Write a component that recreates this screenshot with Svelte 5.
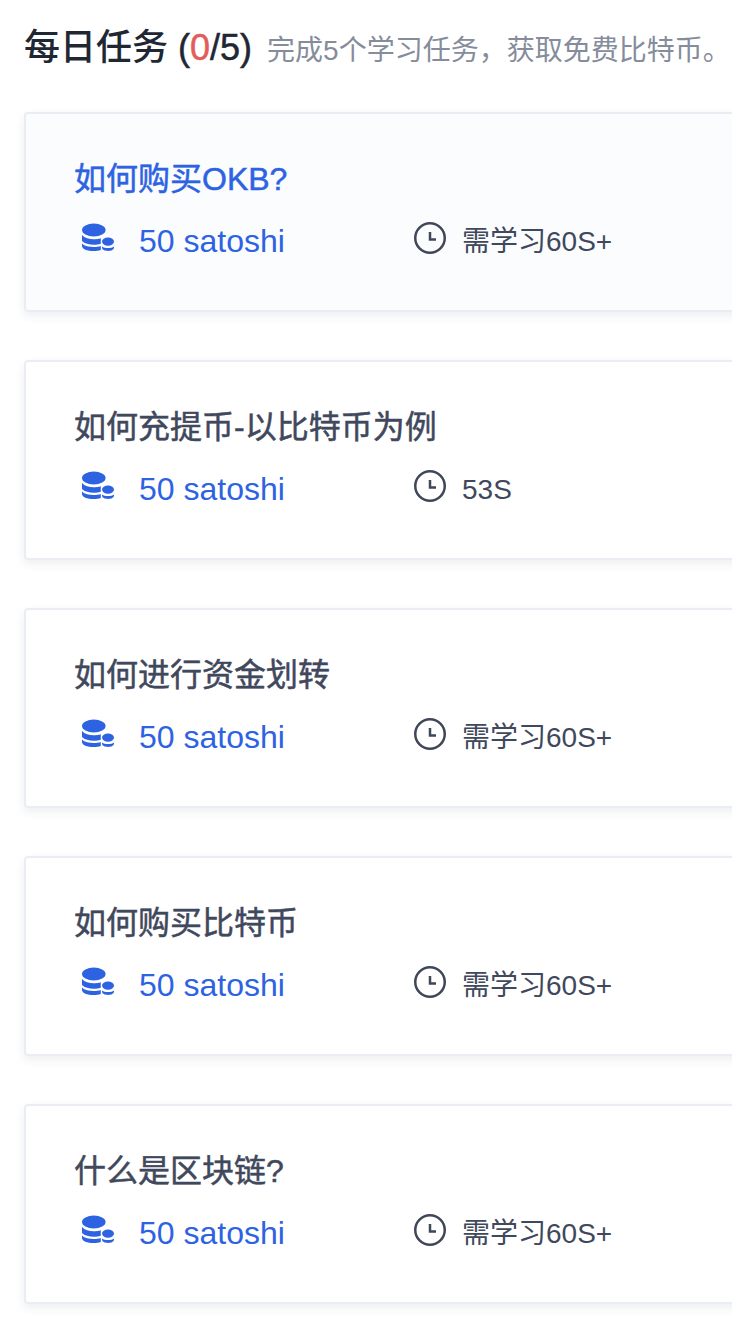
<script lang="ts">
  const tasks = [
    { name: '如何购买OKB?', time: '需学习60S+', active: true },
    { name: '如何充提币-以比特币为例', time: '53S', active: false },
    { name: '如何进行资金划转', time: '需学习60S+', active: false },
    { name: '如何购买比特币', time: '需学习60S+', active: false },
    { name: '什么是区块链?', time: '需学习60S+', active: false }
  ]
</script>

<div class="page">
  <header class="head">
    <h2>每日任务 <span class="count">(<em>0</em>/5)</span></h2>
    <p>完成5个学习任务，获取免费比特币。</p>
  </header>

  <ul class="list">
    {#each tasks as task}
      <li class="card" class:active={task.active}>
        <div class="name">{task.name}</div>
        <div class="meta">
          <div class="reward">
            <svg class="coins" viewBox="0 0 32 29" width="32" height="29" aria-hidden="true">
              <ellipse cx="11.8" cy="7" rx="11.8" ry="6.5" />
              <path d="M0 12c2.5 3 7 4.2 11.8 4.2 2.5 0 5-.3 7-1v5.5c-2 .7-4.5 1-7 1C7 21.7 2.5 20.5 0 18z" />
              <path d="M0 20.5c2.5 2.6 7 3.5 11.8 3.5 2.5 0 5-.3 7-1v4c-2 .7-4.5 1-7 1C5 28 0 26 0 23z" />
              <ellipse cx="26" cy="18.6" rx="6" ry="4.2" />
              <path d="M20 23.4c1.4 1 3.5 1.5 6 1.5s4.6-.5 6-1.5v1.2c0 2.2-2.7 3.4-6 3.4s-6-1.2-6-3.4z" />
            </svg>
            <span>50 satoshi</span>
          </div>
          <div class="time">
            <svg class="clock" viewBox="0 0 32 32" width="32" height="32" aria-hidden="true">
              <circle cx="16" cy="16" r="14.75" />
              <path d="M16 10v7.5h6" />
            </svg>
            <span>{task.time}</span>
          </div>
        </div>
      </li>
    {/each}
  </ul>
</div>

<style>
  :global(body) {
    margin: 0;
    background: #fff;
    font-family: "Liberation Sans", "Noto Sans CJK SC", sans-serif;
  }

  .page {
    width: 732px;
    height: 1334px;
    overflow: hidden;
    padding: 25px 0 0 24px;
    box-sizing: border-box;
  }

  .head {
    display: flex;
    align-items: baseline;
    gap: 15px;
    height: 87px;
    white-space: nowrap;
  }

  h2 {
    margin: 0;
    font-size: 36px;
    line-height: 46px;
    font-weight: 500;
    color: #1f2733;
  }

  .count {
    -webkit-text-stroke: 0.5px currentColor;
  }

  em {
    font-style: normal;
    color: #e25c5c;
  }

  p {
    margin: 0;
    font-size: 28px;
    line-height: 46px;
    color: #858c9c;
  }

  .list {
    list-style: none;
    margin: 0;
    padding: 0;
    display: flex;
    flex-direction: column;
    gap: 48px;
  }

  .card {
    width: 760px;
    height: 200px;
    box-sizing: border-box;
    padding: 44px 48px 0;
    background: #fff;
    border: 2px solid #eaedf4;
    border-radius: 4px;
    box-shadow: 0 4px 10px rgba(40, 50, 80, 0.08);
  }

  .card.active {
    background: #fbfcfe;
  }

  .name {
    font-size: 32px;
    line-height: 42px;
    color: #3f485c;
    -webkit-text-stroke: 0.5px currentColor;
  }

  .active .name {
    color: #2d63e2;
  }

  .meta {
    display: flex;
    align-items: center;
    margin-top: 21px;
    height: 40px;
  }

  .reward {
    display: flex;
    align-items: center;
    width: 332px;
    margin-left: 8px;
    font-size: 32px;
    color: #2d63e2;
  }

  .coins {
    flex-shrink: 0;
    margin: -7px 25px 0 0;
    fill: #2d63e2;
  }

  .time {
    display: flex;
    align-items: center;
    gap: 16px;
    margin-top: -2px;
    font-size: 28px;
    line-height: 40px;
    color: #3f485c;
  }

  .time span {
    margin-top: 4px;
  }

  .clock {
    flex-shrink: 0;
    margin-top: -4px;
    fill: none;
    stroke: #3f4759;
    stroke-width: 2.5;
  }
</style>
